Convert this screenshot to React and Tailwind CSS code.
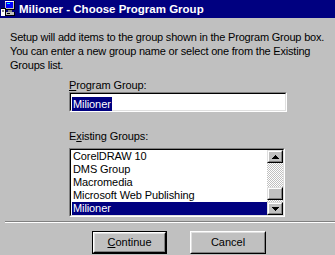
import React from "react";

const font = { fontFamily: '"Liberation Sans", Arial, sans-serif' };

function Icon() {
  return (
    <svg width="16" height="16" viewBox="0 0 16 16" shapeRendering="crispEdges">
      <rect x="4" y="0" width="10" height="9" fill="#c0c0c0" />
      <rect x="4" y="0" width="10" height="1" fill="#fff" />
      <rect x="13" y="0" width="1" height="9" fill="#000" />
      <rect x="4" y="8" width="10" height="1" fill="#000" />
      <rect x="5" y="1" width="7" height="6" fill="#0000ff" />
      <rect x="6" y="2" width="3" height="1" fill="#00ffff" />
      <rect x="7" y="9" width="4" height="2" fill="#808080" />
      <rect x="0" y="7" width="5" height="8" fill="#fff" />
      <rect x="0" y="7" width="5" height="1" fill="#000" />
      <rect x="4" y="7" width="1" height="8" fill="#000" />
      <rect x="1" y="9" width="2" height="2" fill="#808080" />
      <rect x="5" y="11" width="9" height="4" fill="#c0c0c0" />
      <rect x="5" y="14" width="9" height="1" fill="#000" />
      <rect x="13" y="11" width="1" height="4" fill="#000" />
      <rect x="6" y="12" width="3" height="1" fill="#000" />
    </svg>
  );
}

function Arrow({ up }) {
  return (
    <svg width="7" height="4" viewBox="0 0 7 4" shapeRendering="crispEdges">
      {up ? (
        <path d="M3 0h1v1h1v1h1v1h1v1H0V3h1V2h1V1h1z" fill="#000" />
      ) : (
        <path d="M0 0h7v1H6v1H5v1H4v1H3V3H2V2H1V1H0z" fill="#000" />
      )}
    </svg>
  );
}

function ScrollBtn({ up, className }) {
  return (
    <div className={"border-t border-l border-t-[#dfdfdf] border-l-[#dfdfdf] border-b border-r border-b-black border-r-black " + className}>
      <div className="w-full h-full border-t border-l border-t-white border-l-white border-b border-r border-b-[#808080] border-r-[#808080] bg-[#c0c0c0] flex items-center justify-center">
        <Arrow up={up} />
      </div>
    </div>
  );
}

export default function App() {
  const items = ["CorelDRAW 10", "DMS Group", "Macromedia", "Microsoft Web Publishing", "Milioner"];
  return (
    <div className="w-[335px] h-[255px] bg-[#c0c0c0] overflow-hidden text-[11px] text-black" style={font}>
      <div className="h-[18px] bg-[#000080] flex items-center pl-[1px]">
        <Icon />
        <span className="ml-[2px] text-white font-bold text-[11.5px] leading-[18px]">Milioner - Choose Program Group</span>
      </div>
      <div className="pt-[12px] pl-[10px] leading-[14px] tracking-[-0.2px]">
        <div>Setup will add items to the group shown in the Program Group box.</div>
        <div>You can enter a new group name or select one from the Existing</div>
        <div>Groups list.</div>
      </div>
      <div className="pl-[69px] mt-[6px]">
        <div className="leading-[14px] tracking-[-0.1px]"><span className="underline">P</span>rogram Group:</div>
        <div className="w-[218px] h-[20px] border-t border-l border-t-[#808080] border-l-[#808080] border-b border-r border-b-white border-r-white">
          <div className="w-full h-full border-t border-l border-t-black border-l-black border-b border-r border-b-[#dfdfdf] border-r-[#dfdfdf] bg-white pl-[1px] pt-[2px]">
            <span className="inline-block bg-[#000080] text-white leading-[14px] px-[1px] tracking-[-0.1px]">Milioner</span>
          </div>
        </div>
        <div className="mt-[17px] leading-[14px] tracking-[-0.1px]">E<span className="underline">x</span>isting Groups:</div>
        <div className="mt-[5px] w-[216px] h-[69px] border-t border-l border-t-[#808080] border-l-[#808080] border-b border-r border-b-white border-r-white">
          <div className="w-full h-full border-t border-l border-t-black border-l-black border-b border-r border-b-[#dfdfdf] border-r-[#dfdfdf] bg-white flex">
            <div className="flex-1 flex flex-col pl-[1px]">
              {items.map((it, i) => (
                <div
                  key={it}
                  className={"h-[13px] leading-[13px] pl-[1px] tracking-[-0.1px] " + (i === 4 ? "bg-[#000080] text-white" : "")}
                >
                  {it}
                </div>
              ))}
            </div>
            <div className="w-[16px] flex flex-col bg-[repeating-conic-gradient(#c0c0c0_0_25%,#ffffff_0_50%)] bg-[length:2px_2px]">
              <ScrollBtn up className="h-[13px]" />
              <div className="flex-1 flex flex-col justify-end">
                <div className="h-[13px] border-t border-l border-t-[#dfdfdf] border-l-[#dfdfdf] border-b border-r border-b-black border-r-black">
                  <div className="w-full h-full border-t border-l border-t-white border-l-white border-b border-r border-b-[#808080] border-r-[#808080] bg-[#c0c0c0]" />
                </div>
                <div className="h-[2px]" />
              </div>
              <ScrollBtn className="h-[13px]" />
            </div>
          </div>
        </div>
      </div>
      <div className="mt-[4px] ml-[5px] h-[2px] border-t border-t-[#808080] border-b border-b-white" />
      <div className="mt-[8px] flex pl-[92px] gap-[23px]">
        <div className="w-[75px] h-[23px] border border-black">
          <div className="w-full h-full border-t border-l border-t-white border-l-white border-b border-r border-b-black border-r-black">
            <div className="w-full h-full border-t border-l border-t-[#dfdfdf] border-l-[#dfdfdf] border-b border-r border-b-[#808080] border-r-[#808080] flex items-center justify-center leading-[13px]">
              <span><span className="underline">C</span>ontinue</span>
            </div>
          </div>
        </div>
        <div className="w-[76px] h-[23px] border-t border-l border-t-white border-l-white border-b border-r border-b-black border-r-black">
          <div className="w-full h-full border-t border-l border-t-[#dfdfdf] border-l-[#dfdfdf] border-b border-r border-b-[#808080] border-r-[#808080] flex items-center justify-center leading-[13px]">
            Cancel
          </div>
        </div>
      </div>
    </div>
  );
}
